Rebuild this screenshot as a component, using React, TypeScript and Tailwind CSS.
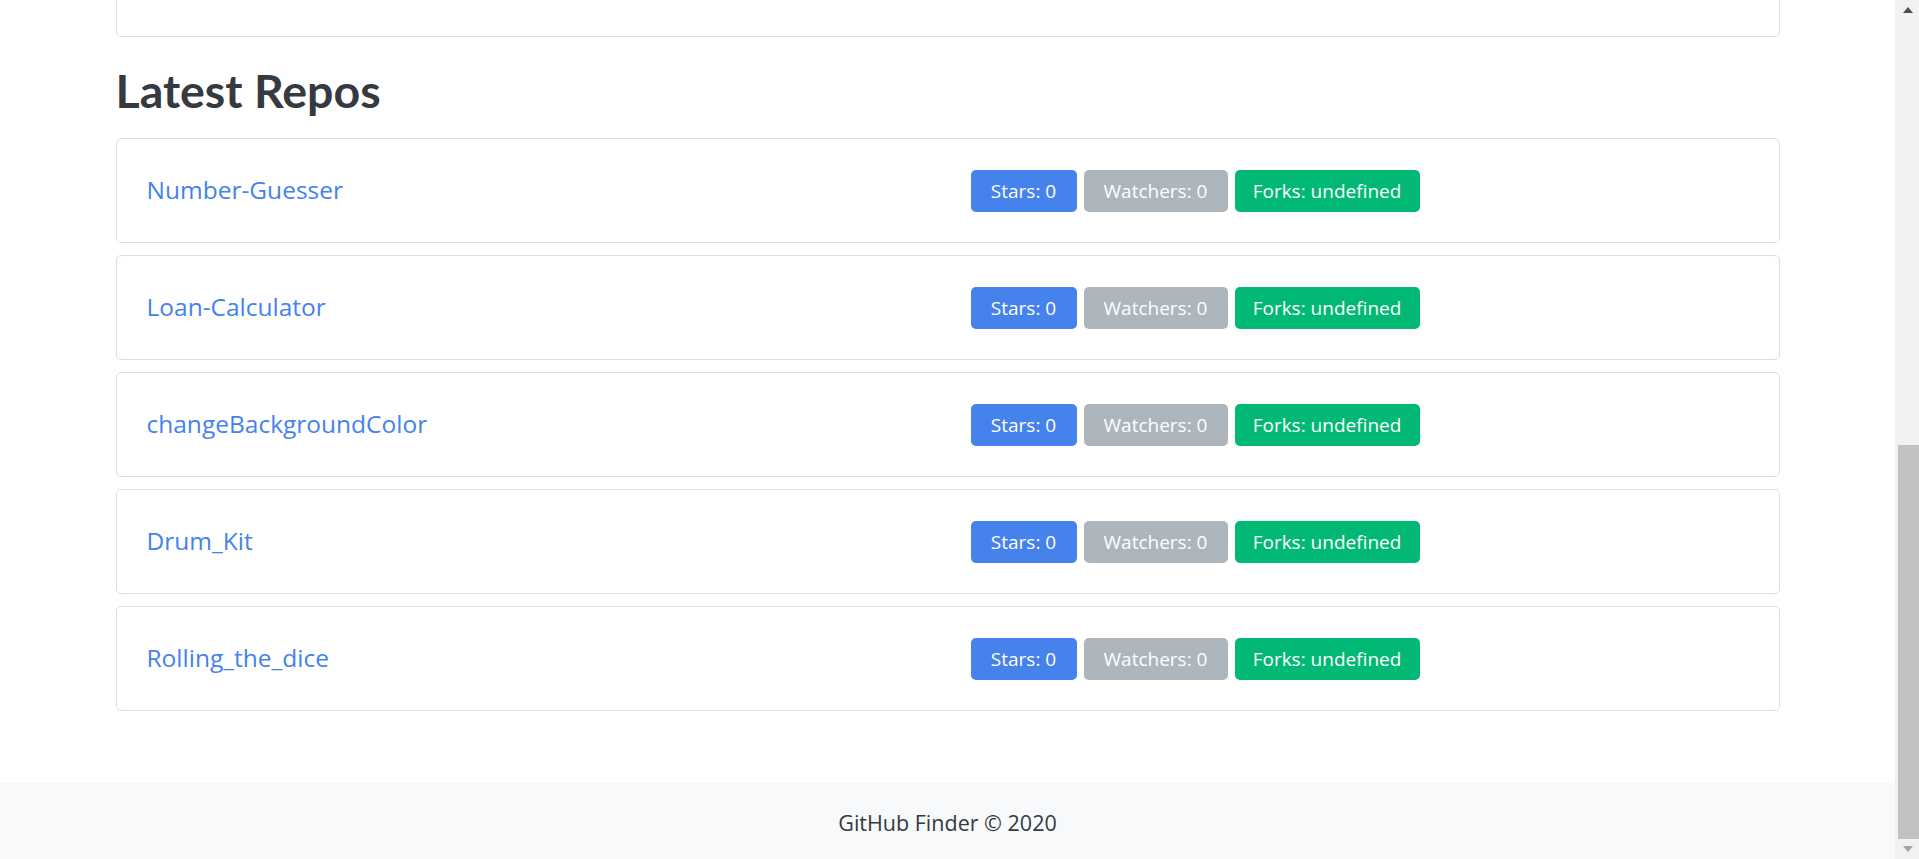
import React from "react";

const repos = [
    "Number-Guesser",
    "Loan-Calculator",
    "changeBackgroundColor",
    "Drum_Kit",
    "Rolling_the_dice",
];

const RepoItem = ({name}: {name: string}) => {
    return (
        <div className="flex items-center h-[105px] mb-[12px] border border-[#dfdfdf] rounded-[5px] bg-white pl-[30px]">
            <div className="w-[824px] pt-[2px]">
                <a href="#" className="text-[24.5px] text-[#4582ec] leading-none">{name}</a>
            </div>
            <div className="flex gap-[7px] pt-[1px]">
                <span className="h-[42px] w-[106px] flex items-center justify-center rounded-[5px] bg-[#4582ec] text-white text-[19px]">Stars: 0</span>
                <span className="h-[42px] w-[144px] flex items-center justify-center rounded-[5px] bg-[#adb5bd] text-white text-[19px]">Watchers: 0</span>
                <span className="h-[42px] w-[185px] flex items-center justify-center rounded-[5px] bg-[#02b875] text-white text-[19px]">Forks: undefined</span>
            </div>
        </div>
    )
}

const App = () => {
    return (
        <div className="flex h-[859px] overflow-hidden bg-white" style={{fontFamily: '"Open Sans", "Noto Sans", sans-serif'}}>
            <div className="w-[1895px] flex flex-col">
                <div className="w-[1664px] mx-auto">
                    <div className="h-[37px] border-x border-b border-[#dfdfdf] rounded-b-[5px]"></div>
                    <h1 className="text-[46.5px] font-bold text-[#343a40] leading-[60px] mt-[23px] mb-[18px]" style={{fontFamily: 'Lato, "Open Sans", sans-serif'}}>Latest Repos</h1>
                    {repos.map((r) => (
                        <RepoItem key={r} name={r}/>
                    ))}
                </div>
                <div className="mt-auto h-[76px] bg-[#f8f9fa] flex items-center justify-center text-[21.5px] text-[#343a40] pt-[5px]">
                    GitHub Finder © 2020
                </div>
            </div>
            <div className="w-[24px] bg-[#f1f1f1] flex flex-col items-center pl-[2px]">
                <div className="h-[18px] flex items-center justify-center">
                    <div className="w-0 h-0 border-x-[5px] border-x-transparent border-b-[6px] border-b-[#505050] mt-[2px]"></div>
                </div>
                <div className="flex-1"></div>
                <div className="w-[21px] h-[394px] bg-[#c1c1c1]"></div>
                <div className="h-[20px] flex items-center justify-center">
                    <div className="w-0 h-0 border-x-[5px] border-x-transparent border-t-[6px] border-t-[#a3a3a3]"></div>
                </div>
            </div>
        </div>
    )
}
export default App
